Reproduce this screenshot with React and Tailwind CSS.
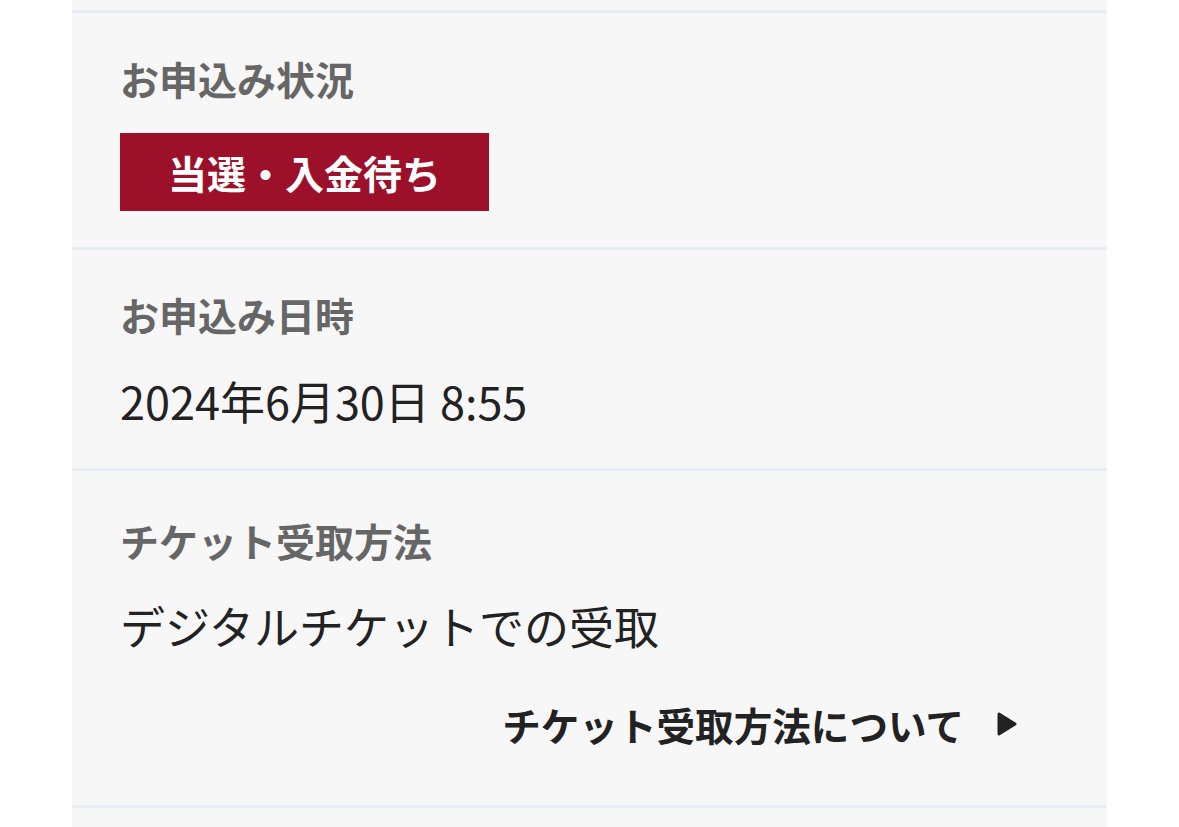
export default function App() {
  const font = { fontFamily: '"Noto Sans CJK JP", "Noto Sans", sans-serif' };
  return (
    <div className="min-h-[827px] bg-white" style={font}>
      <div className="mx-[72px] w-[1035px] bg-[#f7f7f7] pt-[10px] pb-[19px]">
        <div className="border-t-[3px] border-b-[3px] border-[#e9ecf5]">
          {/* status */}
          <section className="px-[48px] pt-[37px] pb-[36px]">
            <h3 className="text-[39px] leading-[56px] font-bold text-[#666]">お申込み状況</h3>
            <div className="mt-[27px] inline-flex h-[78px] items-center bg-[#9c1129] px-[48px] text-[39px] font-bold text-white">
              当選・入金待ち
            </div>
          </section>
          {/* date */}
          <section className="border-t-[3px] border-[#e9ecf5] px-[48px] pt-[36px] pb-[33px]">
            <h3 className="text-[39px] leading-[56px] font-bold text-[#666]">お申込み日時</h3>
            <p className="mt-[25px] text-[45px] leading-[68px] text-[#222]">2024年6月30日 8:55</p>
          </section>
          {/* ticket */}
          <section className="border-t-[3px] border-[#e9ecf5] px-[48px] pt-[41px] pb-[53px]">
            <h3 className="text-[39px] leading-[56px] font-bold text-[#666]">チケット受取方法</h3>
            <p className="mt-[24px] text-[45px] leading-[68px] text-[#222]">デジタルチケットでの受取</p>
            <div className="mt-[36px] flex justify-end pr-[42px]">
              <a className="flex items-center gap-[33px] text-[38.6px] leading-[56px] font-bold text-[#222]">
                チケット受取方法について
                <svg width="20" height="24" viewBox="0 0 20 24">
                  <path d="M2 2 L18 12 L2 22 Z" fill="#222" stroke="#222" strokeWidth="3" strokeLinejoin="round" />
                </svg>
              </a>
            </div>
          </section>
        </div>
      </div>
    </div>
  );
}
